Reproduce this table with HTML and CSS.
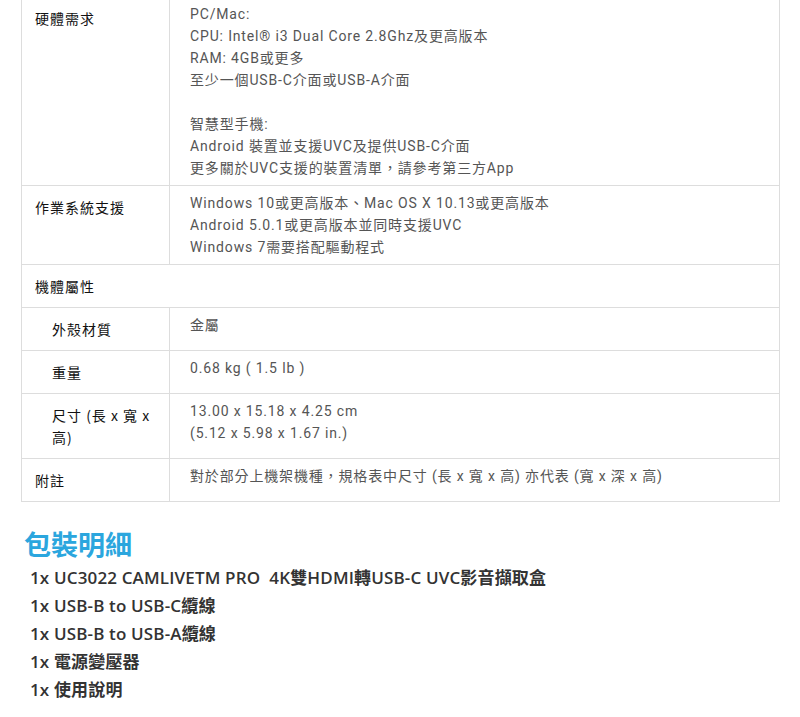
FILE: index.html
```html
<!DOCTYPE html>
<html lang="zh-Hant">
<head>
    <meta charset="UTF-8">
    <meta name="viewport" content="width=device-width, initial-scale=1.0">
    <title>UC3022 規格</title>
    <link rel="stylesheet" href="styles.css">
</head>
<body>
    <table class="spec-table">
        <tr>
            <th class="label">硬體需求</th>
            <td class="value">
                PC/Mac:<br>
                CPU: Intel® i3 Dual Core 2.8Ghz及更高版本<br>
                RAM: 4GB或更多<br>
                至少一個USB-C介面或USB-A介面<br>
                <br>
                智慧型手機:<br>
                Android 裝置並支援UVC及提供USB-C介面<br>
                更多關於UVC支援的裝置清單，請參考第三方App
            </td>
        </tr>
        <tr>
            <th class="label">作業系統支援</th>
            <td class="value">
                Windows 10或更高版本、Mac OS X 10.13或更高版本<br>
                Android 5.0.1或更高版本並同時支援UVC<br>
                Windows 7需要搭配驅動程式
            </td>
        </tr>
        <tr>
            <th class="label" colspan="2">機體屬性</th>
        </tr>
        <tr>
            <th class="label sub">外殼材質</th>
            <td class="value">金屬</td>
        </tr>
        <tr>
            <th class="label sub">重量</th>
            <td class="value">0.68 kg ( 1.5 lb )</td>
        </tr>
        <tr>
            <th class="label sub">尺寸 (長 x 寬 x 高)</th>
            <td class="value">
                13.00 x 15.18 x 4.25 cm<br>
                (5.12 x 5.98 x 1.67 in.)
            </td>
        </tr>
        <tr>
            <th class="label">附註</th>
            <td class="value">對於部分上機架機種，規格表中尺寸 (長 x 寬 x 高) 亦代表 (寬 x 深 x 高)</td>
        </tr>
    </table>

    <h2 class="package-title">包裝明細</h2>
    <ul class="package-list">
        <li>1x UC3022 CAMLIVETM PRO&nbsp; 4K雙HDMI轉USB-C UVC影音擷取盒</li>
        <li>1x USB-B to USB-C纜線</li>
        <li>1x USB-B to USB-A纜線</li>
        <li>1x 電源變壓器</li>
        <li>1x 使用說明</li>
    </ul>
</body>
</html>
```

FILE: styles.css
```css
body {
    margin: 0;
    padding: 0 21px;
    background: #fff;
    font-family: Roboto, "Noto Sans CJK TC", sans-serif;
}

.spec-table {
    width: 759px;
    margin-top: -4px;
    border-collapse: collapse;
    border: 1px solid #ddd;
    font-size: 14px;
    line-height: 22px;
}

.spec-table th,
.spec-table td {
    border: 1px solid #ddd;
    vertical-align: top;
    text-align: left;
}

.label {
    width: 121px;
    padding: 10px 13px 10px 13px;
    font-family: "Noto Sans CJK TC", sans-serif;
    font-weight: 400;
    letter-spacing: 1px;
    color: #111;
}

.label.sub {
    padding-left: 30px;
    width: 104px;
}

.value {
    padding: 6px 20px 6px 20px;
    color: #555;
    letter-spacing: 0.85px;
}

.package-title {
    margin: 22px 0 0 3px;
    font-family: "Noto Sans CJK TC", sans-serif;
    font-size: 27px;
    line-height: 40px;
    font-weight: 700;
    color: #2ba6de;
}

.package-list {
    list-style: none;
    margin: 0;
    padding: 0 0 0 9px;
    font-family: "Open Sans", "Noto Sans CJK TC", sans-serif;
    font-size: 17px;
    font-weight: 600;
    letter-spacing: 0.15px;
    line-height: 28px;
    color: #333;
}
```
